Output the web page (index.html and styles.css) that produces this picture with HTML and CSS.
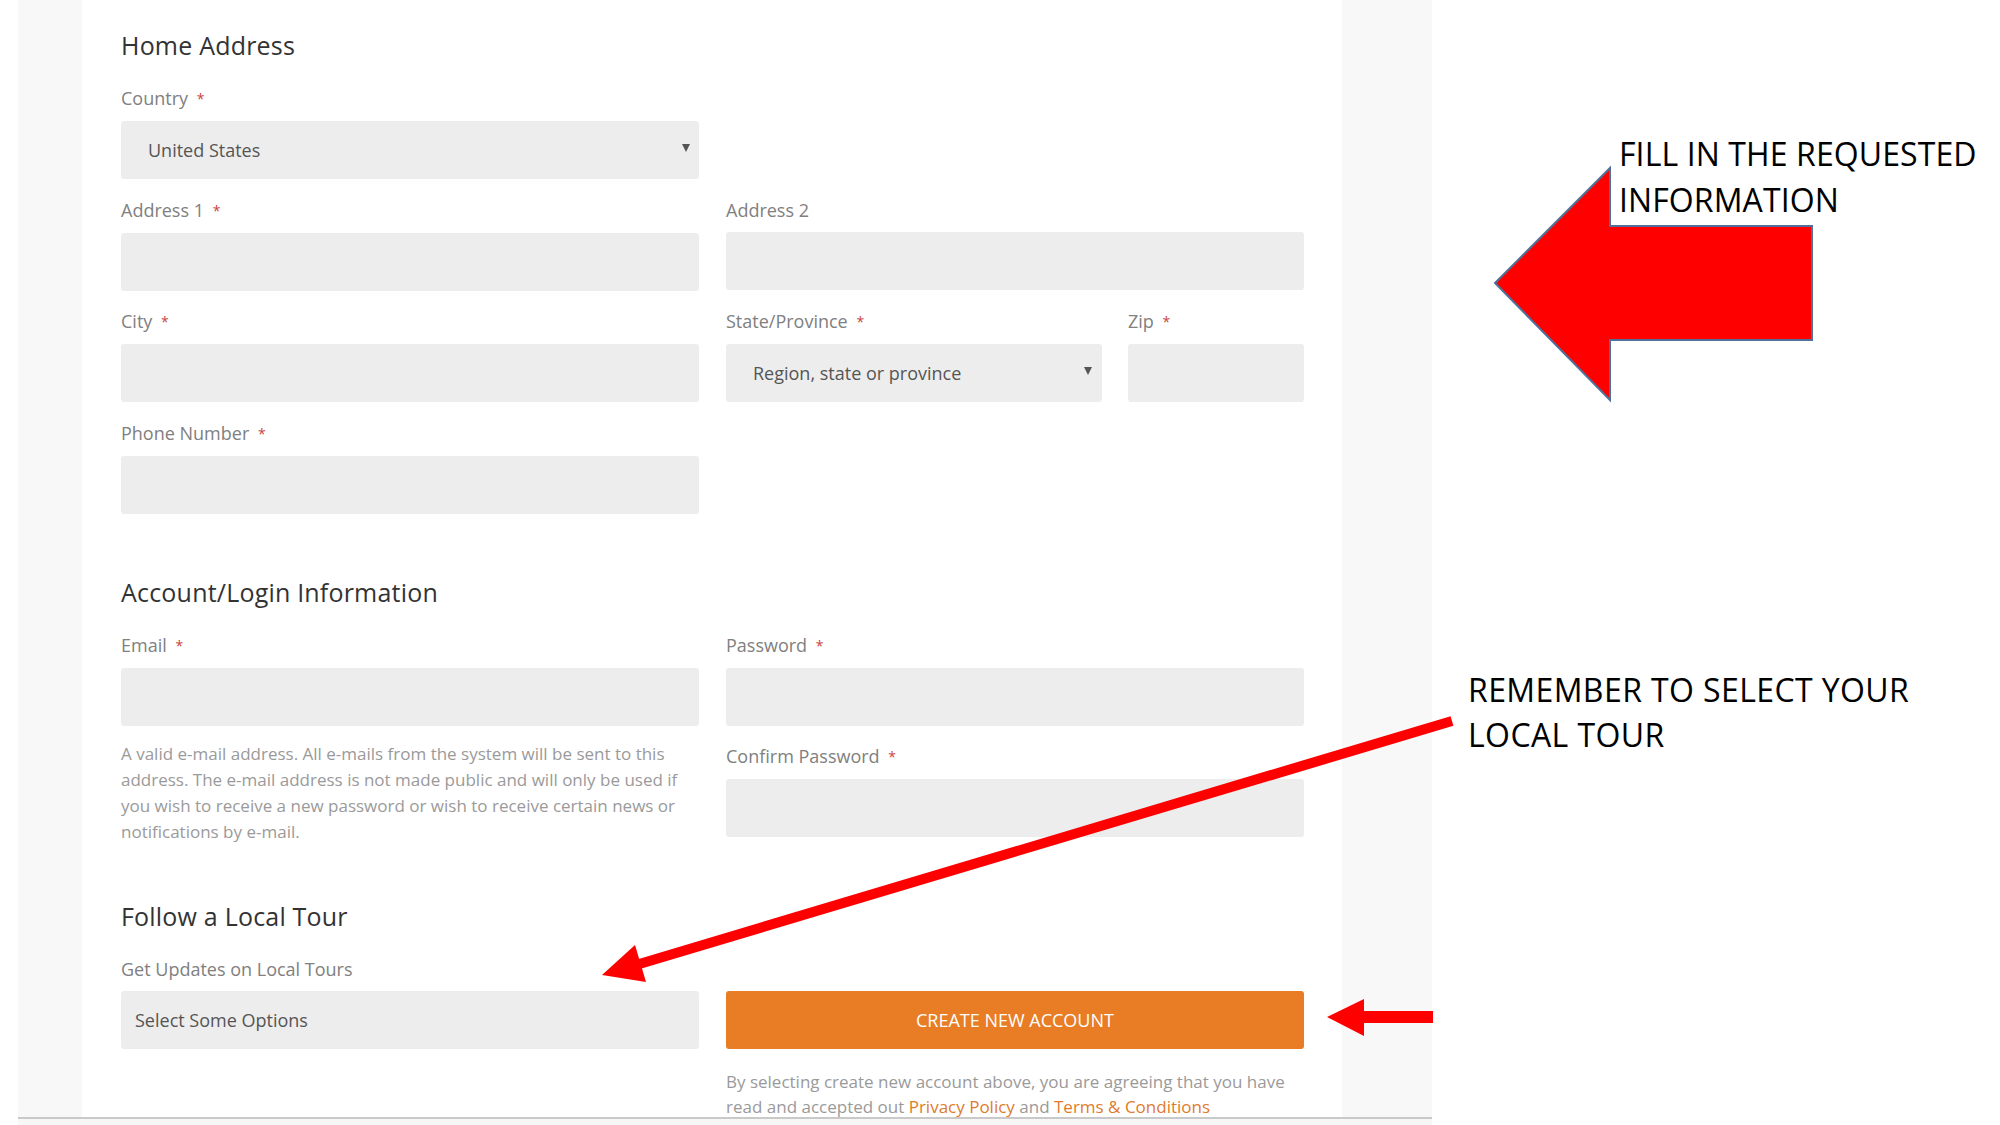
FILE: index.html
```html
<!DOCTYPE html>
<html lang="en">
<head>
<meta charset="utf-8">
<title>Registration form</title>
<link rel="stylesheet" href="styles.css">
</head>
<body>
<div class="slide">
  <div class="shot">
    <div class="gutter gutter-left"></div>
    <main class="panel">
      <section class="section">
        <h2 class="section-title">Home Address</h2>
        <div class="grid">
          <div class="field">
            <div class="label">Country <span class="req">*</span></div>
            <div class="box select"><span class="value">United States</span><span class="caret"></span></div>
          </div>
          <div></div>
          <div class="field">
            <div class="label">Address 1 <span class="req">*</span></div>
            <div class="box"></div>
          </div>
          <div class="field">
            <div class="label">Address 2</div>
            <div class="box"></div>
          </div>
          <div class="field">
            <div class="label">City <span class="req">*</span></div>
            <div class="box"></div>
          </div>
          <div class="subgrid">
            <div class="field">
              <div class="label">State/Province <span class="req">*</span></div>
              <div class="box select select-state"><span class="value">Region, state or province</span><span class="caret"></span></div>
            </div>
            <div class="field">
              <div class="label">Zip <span class="req">*</span></div>
              <div class="box"></div>
            </div>
          </div>
          <div class="field">
            <div class="label">Phone Number <span class="req">*</span></div>
            <div class="box"></div>
          </div>
        </div>
      </section>

      <section class="section section-account">
        <h2 class="section-title">Account/Login Information</h2>
        <div class="grid">
          <div class="col">
            <div class="field">
              <div class="label">Email <span class="req">*</span></div>
              <div class="box"></div>
            </div>
            <p class="help">A valid e-mail address. All e-mails from the system will be sent to this address. The e-mail address is not made public and will only be used if you wish to receive a new password or wish to receive certain news or notifications by e-mail.</p>
          </div>
          <div class="col col-stack">
            <div class="field">
              <div class="label">Password <span class="req">*</span></div>
              <div class="box"></div>
            </div>
            <div class="field">
              <div class="label">Confirm Password <span class="req">*</span></div>
              <div class="box"></div>
            </div>
          </div>
        </div>
      </section>

      <section class="section section-tour">
        <h2 class="section-title">Follow a Local Tour</h2>
        <div class="tour-grid">
          <div class="label tour-label">Get Updates on Local Tours</div>
          <div class="box multi"><span class="value">Select Some Options</span></div>
          <div class="button">CREATE NEW ACCOUNT</div>
          <p class="terms">By selecting create new account above, you are agreeing that you have read and accepted out <span class="link">Privacy Policy</span> and <span class="link">Terms &amp; Conditions</span></p>
        </div>
      </section>
    </main>
    <div class="gutter gutter-right"></div>
  </div>
  <div class="shot-base"></div>
</div>

<svg class="overlay" width="2000" height="1125" viewBox="0 0 2000 1125" xmlns="http://www.w3.org/2000/svg">
  <polygon points="1495,283 1610,168 1610,226 1812,226 1812,340 1610,340 1610,400" fill="#ff0000" stroke="#50709a" stroke-width="2" stroke-linejoin="miter"/>
  <line x1="1452" y1="721" x2="636" y2="965" stroke="#ff0000" stroke-width="10"/>
  <polygon points="602,975 635,945 646,982" fill="#ff0000"/>
  <polygon points="1327,1017 1364,999 1364,1011 1433,1011 1433,1023 1364,1023 1364,1036" fill="#ff0000"/>
</svg>

<p class="note note-fill">FILL IN THE REQUESTED<br>INFORMATION</p>
<p class="note note-tour">REMEMBER TO SELECT YOUR<br>LOCAL TOUR</p>
</body>
</html>
```

FILE: styles.css
```css
* { box-sizing: border-box; }

html, body {
  margin: 0;
  padding: 0;
  background: #ffffff;
}

body {
  width: 2000px;
  height: 1125px;
  overflow: hidden;
  position: relative;
  font-family: "Open Sans", "DejaVu Sans", sans-serif;
}

.slide {
  padding-left: 18px;
  width: 2000px;
  height: 1125px;
}

.shot {
  display: flex;
  width: 1414px;
  height: 1119px;
  overflow: hidden;
  border-bottom: 2px solid #c9c9c9;
}

.shot-base {
  width: 1414px;
  height: 6px;
  background: #f7f7f7;
}

.gutter {
  background: #f8f8f8;
  flex: none;
}
.gutter-left { width: 64px; }
.gutter-right { width: 90px; }

.panel {
  flex: none;
  width: 1260px;
  background: #ffffff;
  padding: 30px 38px 0 39px;
}

.section-title {
  margin: 0 0 26px;
  font-size: 25px;
  line-height: 30px;
  font-weight: 400;
  letter-spacing: 0.2px;
  color: #333333;
}

.section-account { margin-top: 63px; }
.section-tour { margin-top: 56px; }

.grid {
  display: grid;
  grid-template-columns: 578px 578px;
  column-gap: 27px;
  row-gap: 18.5px;
}

.subgrid {
  display: grid;
  grid-template-columns: 376px 176px;
  column-gap: 26px;
}

.col-stack {
  display: flex;
  flex-direction: column;
  gap: 18.5px;
}

.label {
  font-size: 18px;
  line-height: 24px;
  color: #808080;
  margin-bottom: 10px;
  white-space: nowrap;
}

.req {
  color: #c9443e;
  font-size: 14px;
  margin-left: 4px;
  vertical-align: 1px;
}

.box {
  height: 58px;
  background: #ededed;
  border-radius: 3px;
}

.select {
  display: flex;
  align-items: center;
  justify-content: space-between;
  padding: 0 9px 0 27px;
}

.select-state { padding-right: 10px; }

.value {
  font-size: 18px;
  color: #555555;
}

.caret {
  width: 0;
  height: 0;
  border-left: 4px solid transparent;
  border-right: 4px solid transparent;
  border-top: 8px solid #555555;
  margin-top: -4px;
}

.help {
  margin: 15px 0 0;
  font-size: 17px;
  line-height: 26px;
  color: #9a9a9a;
}

.tour-grid {
  display: grid;
  grid-template-columns: 578px 578px;
  column-gap: 27px;
}

.tour-label { grid-column: 1; grid-row: 1; }

.multi {
  grid-column: 1;
  grid-row: 2;
  display: flex;
  align-items: center;
  padding-left: 14px;
}

.button {
  grid-column: 2;
  grid-row: 2;
  height: 58px;
  background: #e87d25;
  border-radius: 3px;
  color: #ffffff;
  font-size: 18px;
  display: flex;
  align-items: center;
  justify-content: center;
}

.terms {
  grid-column: 2;
  grid-row: 3;
  margin: 20px 0 0;
  font-size: 17px;
  line-height: 25px;
  color: #9a9a9a;
}

.link { color: #df7b2c; }

.overlay {
  position: absolute;
  left: 0;
  top: 0;
  pointer-events: none;
}

.note {
  position: absolute;
  margin: 0;
  font-family: "Open Sans", "DejaVu Sans", sans-serif;
  font-size: 32px;
  letter-spacing: 0.4px;
  line-height: 46px;
  color: #000000;
  white-space: nowrap;
}

.note-fill { left: 1619px; top: 131px; letter-spacing: 0.1px; }
.note-tour { left: 1468px; top: 667px; line-height: 45px; }
```
